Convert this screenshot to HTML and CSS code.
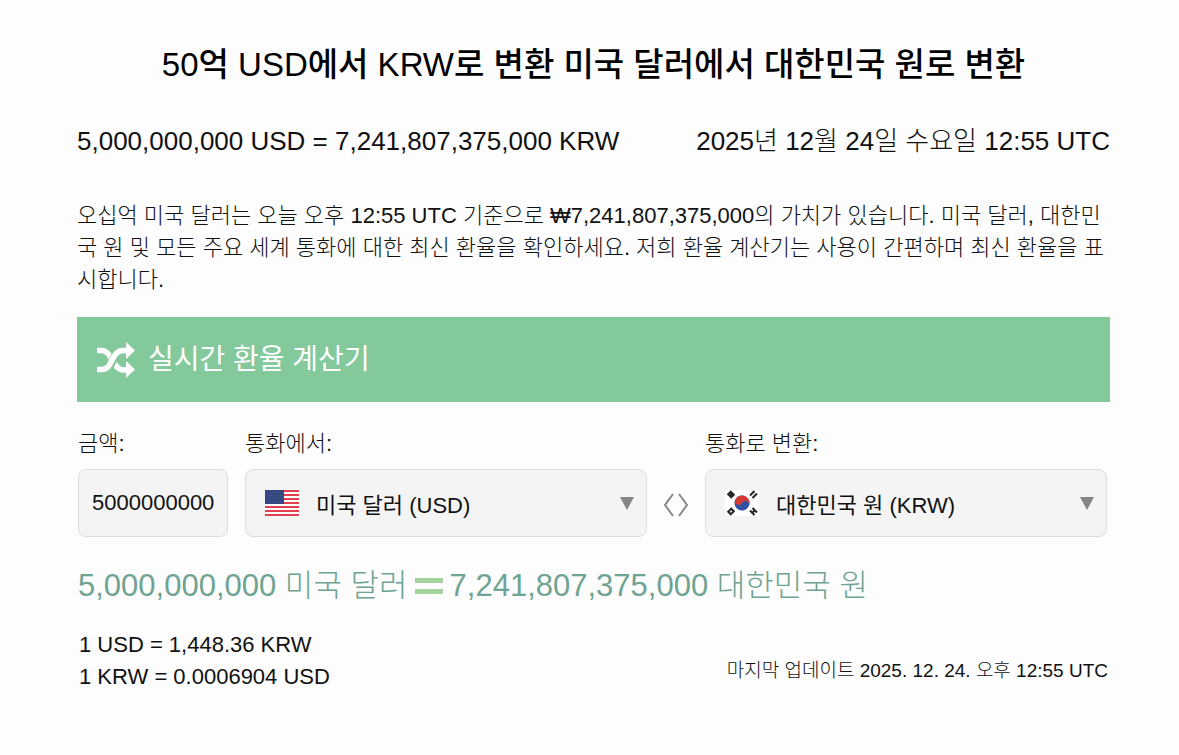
FILE: index.html
```html
<!DOCTYPE html>
<html lang="ko">
<head>
<meta charset="utf-8">
<meta name="viewport" content="width=device-width, initial-scale=1">
<title>50억 USD에서 KRW로 변환</title>
<link rel="stylesheet" href="styles.css">
</head>
<body>
<main class="page">
  <h1 class="title">50억 USD에서 KRW로 변환 미국 달러에서 대한민국 원로 변환</h1>
  <div class="summary">
    <span>5,000,000,000 USD = 7,241,807,375,000 KRW</span>
    <time datetime="2025-12-24T12:55Z">2025년 12월 24일 수요일 12:55 UTC</time>
  </div>
  <p class="intro">오십억 미국 달러는 오늘 오후 12:55 UTC 기준으로 ₩7,241,807,375,000의 가치가 있습니다. 미국 달러, 대한민국 원 및 모든 주요 세계 통화에 대한 최신 환율을 확인하세요. 저희 환율 계산기는 사용이 간편하며 최신 환율을 표시합니다.</p>
  <h2 class="banner">
    <svg class="banner-icon" viewBox="0 0 40 36" aria-hidden="true">
      <path d="M1 8.500h4c6 0 8 4 11 9.500s6 10 12 10h4" fill="none" stroke="#fff" stroke-width="5.500"/>
      <path d="M8 27.500c9 0 9-19 18-19" fill="none" stroke="#84c99c" stroke-width="8"/>
      <path d="M1 27.500h5c11 0 9-19 21-19h5" fill="none" stroke="#fff" stroke-width="5.500"/>
      <path d="M30 0l9 8.500-9 8.500zM30 19l9 8.500-9 8.500z" fill="#fff"/>
    </svg>
    실시간 환율 계산기
  </h2>
  <form class="converter">
    <div class="field field-amount">
      <label for="amount">금액:</label>
      <input class="control" id="amount" type="text" value="5000000000">
    </div>
    <div class="field field-currency">
      <label for="from">통화에서:</label>
      <div class="picker">
        <select class="control" id="from"><option>미국 달러 (USD)</option></select>
        <svg class="flag" viewBox="0 0 34 26" aria-hidden="true">
          <path fill="#fff" d="M0 0h34v26H0z"/>
          <path d="M0 1h34M0 5h34M0 9h34M0 13h34M0 17h34M0 21h34M0 25h34" stroke="#e0404f" stroke-width="2"/>
          <path fill="#34477f" d="M0 0h19v14H0z"/>
          <path d="M2 2.500h16M3 5.500h15M2 8.500h16M3 11.500h15" stroke="#4d5c90" stroke-width="1" stroke-dasharray="1 2"/>
        </svg>
        <svg class="arrow" viewBox="0 0 14 13" aria-hidden="true"><path fill="#858585" d="M0 0h14L7 13z"/></svg>
      </div>
    </div>
    <button class="swap" type="button" aria-label="통화 바꾸기">
      <svg viewBox="0 0 26 26" aria-hidden="true"><path d="M10 2L2 13l8 11M16 2l8 11-8 11" fill="none" stroke="#888" stroke-width="2"/></svg>
    </button>
    <div class="field field-currency">
      <label for="to">통화로 변환:</label>
      <div class="picker">
        <select class="control" id="to"><option>대한민국 원 (KRW)</option></select>
        <svg class="flag" viewBox="0 0 34 26" aria-hidden="true">
          <path fill="#fff" d="M0 0h34v26H0z"/>
          <g transform="translate(17 13) rotate(28)">
            <circle r="7.500" fill="#2f50a4"/>
            <path d="M-7.500 0a7.500 7.500 0 0 1 15 0a3.750 3.750 0 0 0-7.500 0a3.750 3.750 0 0 1-7.500 0z" fill="#d63a35"/>
          </g>
          <g stroke="#222" stroke-width="2" fill="none">
            <path d="M2.500 5l4-4M4 6.500l4-4M5.500 8l4-4"/>
            <path d="M25 4l1.500 1.500M27.500 6.500L29 8M26.500 2.500L28 4M29 5l1.500 1.500M28 1l1.500 1.500M30.500 3.500L32 5"/>
            <path d="M5.500 18l4 4M4 19.500l1.500 1.500M6.500 22L8 23.500M2.500 21l4 4"/>
            <path d="M25 22l1.500-1.500M27.500 19.500L29 18M26.500 23.500l4-4M28 25l1.500-1.500M30.500 22.500L32 21"/>
          </g>
        </svg>
        <svg class="arrow" viewBox="0 0 14 13" aria-hidden="true"><path fill="#858585" d="M0 0h14L7 13z"/></svg>
      </div>
    </div>
  </form>
  <div class="result">
    <span>5,000,000,000 미국 달러</span>
    <svg class="equals" viewBox="0 0 28 16" role="img" aria-label="같음"><path fill="#a5d39d" d="M0 0h28v5H0zM0 11h28v5H0z"/></svg>
    <span>7,241,807,375,000 대한민국 원</span>
  </div>
  <div class="footer">
    <div class="rates">
      <div>1 USD = 1,448.36 KRW</div>
      <div>1 KRW = 0.0006904 USD</div>
    </div>
    <div class="updated">마지막 업데이트 2025. 12. 24. 오후 12:55 UTC</div>
  </div>
</main>
</body>
</html>
```
FILE: styles.css
```css
* { box-sizing: border-box; }

body {
  margin: 0;
  background: #fdfdfd;
  color: #111;
  font-family: "Liberation Sans", "Noto Sans CJK KR", sans-serif;
  font-size: 22px;
  font-weight: 300;
  line-height: 32px;
}

.page { padding: 41px 69px 40px 77px; }

.title {
  margin: 0;
  color: #000;
  font-size: 33px;
  font-weight: 500;
  line-height: 48px;
  text-align: center;
}

.summary {
  display: flex;
  flex-wrap: wrap;
  justify-content: space-between;
  margin-top: 32px;
  font-size: 26px;
  line-height: 40px;
}

.intro { margin: 39px 0 0; }

.banner {
  display: flex;
  align-items: center;
  gap: 12px;
  margin: 21px 0 0;
  padding: 23px 19px 22px;
  background: #84c99c;
  color: #fff;
  font-size: 28px;
  font-weight: 400;
  line-height: 40px;
}

.banner-icon { width: 40px; height: 36px; }

.converter {
  display: flex;
  align-items: flex-end;
  margin-top: 26px;
  padding: 0 3px 0 1px;
}

.field label { display: block; margin-bottom: 9px; }
.field-amount { flex: 0 0 150px; margin-right: 17px; }
.field-currency { flex: 1; }

.control {
  display: block;
  width: 100%;
  height: 68px;
  padding: 0 13px;
  border: 1px solid #dedede;
  border-radius: 8px;
  background: #f4f4f4;
  color: #111;
  font: inherit;
  appearance: none;
}

.picker { position: relative; }
.picker .control { padding: 5px 40px 0 70px; font-weight: 400; }

.flag,
.arrow { position: absolute; pointer-events: none; }
.flag { top: 21px; left: 20px; width: 34px; height: 26px; }
.arrow { top: 28px; right: 13px; width: 14px; height: 13px; }

.swap {
  display: flex;
  align-items: center;
  justify-content: center;
  flex: 0 0 58px;
  height: 68px;
  padding: 4px 0 0;
  border: 0;
  background: none;
}

.swap svg { width: 26px; height: 26px; }

.result {
  display: flex;
  flex-wrap: wrap;
  align-items: center;
  gap: 7px;
  margin-top: 27px;
  padding-left: 1px;
  color: #6fa392;
  font-size: 31px;
  line-height: 44px;
}

.equals { width: 28px; height: 16px; }

.footer {
  display: flex;
  flex-wrap: wrap;
  align-items: flex-end;
  justify-content: space-between;
  margin-top: 21px;
  padding: 0 2px;
}

.updated { padding-bottom: 6px; font-size: 19px; }
```
